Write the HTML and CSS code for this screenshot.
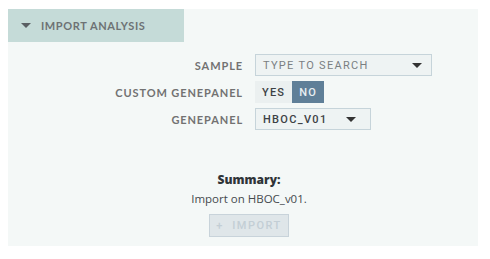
FILE: index.html
```html
<!doctype html>
<html>
	<head>
		<meta http-equiv="Content-Type" content="text/html; charset=utf-8">
		<title>Import analysis</title>
		<link rel="stylesheet" href="styles.css">
	</head>
<body>
	<div class="panel">
		<div class="tab">
			<span class="caret"></span>
			<span class="tab-title">IMPORT ANALYSIS</span>
		</div>
		<div class="form">
			<div class="row">
				<label class="lbl">SAMPLE</label>
				<div class="select sample">
					<span>TYPE TO SEARCH</span>
					<span class="arrow"></span>
				</div>
			</div>
			<div class="row">
				<label class="lbl">CUSTOM GENEPANEL</label>
				<div class="toggle">
					<span class="opt">YES</span>
					<span class="opt on">NO</span>
				</div>
			</div>
			<div class="row">
				<label class="lbl">GENEPANEL</label>
				<div class="select gp">
					<span>HBOC_V01</span>
					<span class="arrow"></span>
				</div>
			</div>
		</div>
		<div class="summary">
			<h4>Summary:</h4>
			<p>Import on HBOC_v01.</p>
			<button class="btn" disabled>+&nbsp;&nbsp;IMPORT</button>
		</div>
	</div>
</body>
</html>
```

FILE: styles.css
```css
*{margin:0;padding:0;box-sizing:border-box;}
body{margin:9px 12px 8px 8px;font-family:"Lato","Liberation Sans",sans-serif;background:#fff;}
.panel{background:#f4f8f7;height:237px;}
.tab{width:176px;height:33px;background:#c5dbd8;display:flex;align-items:center;padding-left:13px;}
.caret{width:0;height:0;border-left:5px solid transparent;border-right:5px solid transparent;border-top:5px solid #5a5f63;margin-right:10px;}
.tab-title{font-size:11px;font-weight:bold;letter-spacing:0.6px;color:#6d7274;}
.form{padding-top:12px;}
.row{display:flex;align-items:center;margin-bottom:5px;}
.lbl{width:247px;text-align:right;padding-right:12px;font-size:11px;font-weight:bold;letter-spacing:0.9px;color:#727272;}
.select{height:22px;border:1px solid #c6d4da;background:#eef3f3;display:flex;align-items:center;justify-content:space-between;padding:0 9px 0 7px;font-family:"Roboto","Liberation Sans",sans-serif;font-size:11px;letter-spacing:1.3px;}
.sample{width:177px;color:#7a7f82;}
.gp{width:116px;color:#3d4145;font-weight:500;padding-right:14px;}
.arrow{width:0;height:0;border-left:5px solid transparent;border-right:5px solid transparent;border-top:5px solid #333;}
.toggle{display:flex;height:22px;}
.opt{display:flex;align-items:center;padding:0 7px;background:#ebf0f0;font-family:"Roboto","Liberation Sans",sans-serif;font-size:11px;font-weight:500;letter-spacing:1.2px;color:#3d4145;}
.opt.on{background:#5f7f98;color:#e8eef2;}
.summary{text-align:center;padding-top:36px;padding-left:12px;}
.summary h4{font-family:"Open Sans","Liberation Sans",sans-serif;font-size:12px;font-weight:800;color:#2f3438;}
.summary p{font-family:"Open Sans","Liberation Sans",sans-serif;font-size:11.5px;color:#454a4e;margin-top:3px;}
.btn{margin-top:8px;width:80px;height:23px;background:#dfe6e9;border:1px solid #c8d3da;color:#c3ced5;font-family:"Roboto","Liberation Sans",sans-serif;font-size:11px;font-weight:500;letter-spacing:1.5px;}
```
